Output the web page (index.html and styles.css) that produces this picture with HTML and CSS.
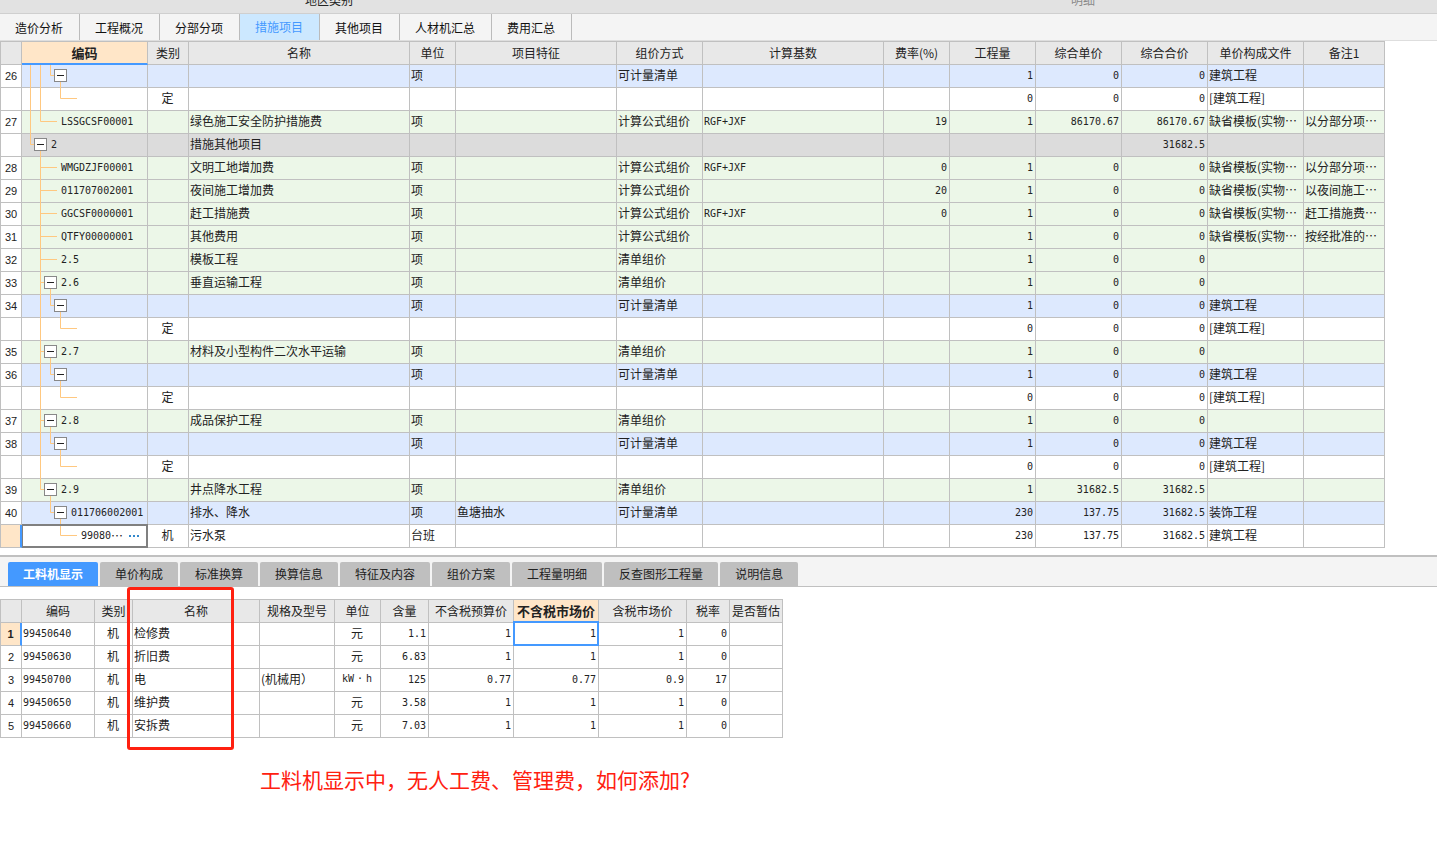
FILE: index.html
```
<!DOCTYPE html>
<html lang="zh-CN">
<head>
<meta charset="utf-8">
<title>措施项目</title>
<link rel="stylesheet" href="styles.css">
</head>
<body>
<svg class="defs" aria-hidden="true">
  <symbol id="end4" viewBox="0 0 60 23"><path d="M18.5 0V23M28.5 0V10.5H32M38.5 17V23"/></symbol>
  <symbol id="leaf4" viewBox="0 0 60 23"><path d="M18.5 0V23M38.5 0V10.5H55"/></symbol>
  <symbol id="outer" viewBox="0 0 60 23"><path d="M8.5 0V23"/></symbol>
  <symbol id="last2" viewBox="0 0 60 23"><path d="M18.5 0V10.5H35"/></symbol>
  <symbol id="root" viewBox="0 0 60 23"><path d="M8.5 0V10.5H12M18.5 17V23"/></symbol>
  <symbol id="leaf2" viewBox="0 0 60 23"><path d="M18.5 0V23M18.5 10.5H35"/></symbol>
  <symbol id="node3" viewBox="0 0 60 23"><path d="M18.5 0V23M18.5 10.5H22M28.5 17V23"/></symbol>
  <symbol id="node3end" viewBox="0 0 60 23"><path d="M18.5 0V10.5H22M28.5 17V23"/></symbol>
  <symbol id="node4end" viewBox="0 0 60 23"><path d="M28.5 0V10.5H32M38.5 17V23"/></symbol>
  <symbol id="leaf4end" viewBox="0 0 60 23"><path d="M38.5 0V10.5H55"/></symbol>
</svg>

<header class="ribbon"><span class="region">地区类别</span><span class="detail">明细</span></header>

<nav class="main-tabs">
  <button>造价分析</button><button>工程概况</button><button>分部分项</button><button class="active">措施项目</button><button>其他项目</button><button>人材机汇总</button><button>费用汇总</button>
</nav>

<main>
<table class="grid measures">
<colgroup><col class="w21"><col class="w126"><col class="w41"><col class="w221"><col class="w46"><col class="w161"><col class="w86"><col class="w181"><col class="w66"><col class="w86"><col class="w86"><col class="w86"><col class="w96"><col class="w81"></colgroup>
<thead><tr><th></th><th class="current underlined">编码</th><th>类别</th><th>名称</th><th>单位</th><th>项目特征</th><th>组价方式</th><th>计算基数</th><th>费率(%)</th><th>工程量</th><th>综合单价</th><th>综合合价</th><th>单价构成文件</th><th>备注1</th></tr></thead>
<tbody>
<tr class="blue"><td>26</td><td><div class="tree l4"><svg><use href="#outer"/><use href="#end4"/></svg><button class="toggle" aria-label="折叠"></button></div></td><td></td><td></td><td>项</td><td></td><td>可计量清单</td><td></td><td></td><td>1</td><td>0</td><td>0</td><td>建筑工程</td><td></td></tr>
<tr><td></td><td><div class="tree"><svg><use href="#outer"/><use href="#leaf4"/></svg></div></td><td>定</td><td></td><td></td><td></td><td></td><td></td><td></td><td>0</td><td>0</td><td>0</td><td>[建筑工程]</td><td></td></tr>
<tr class="green"><td>27</td><td><div class="tree leaf"><svg><use href="#outer"/><use href="#last2"/></svg><span>LSSGCSF00001</span></div></td><td></td><td>绿色施工安全防护措施费</td><td>项</td><td></td><td>计算公式组价</td><td>RGF+JXF</td><td>19</td><td>1</td><td>86170.67</td><td>86170.67</td><td>缺省模板(实物…</td><td>以分部分项…</td></tr>
<tr class="gray"><td></td><td><div class="tree l2"><svg><use href="#root"/></svg><button class="toggle" aria-label="折叠"></button><span>2</span></div></td><td></td><td>措施其他项目</td><td></td><td></td><td></td><td></td><td></td><td></td><td></td><td>31682.5</td><td></td><td></td></tr>
<tr class="green"><td>28</td><td><div class="tree leaf"><svg><use href="#leaf2"/></svg><span>WMGDZJF00001</span></div></td><td></td><td>文明工地增加费</td><td>项</td><td></td><td>计算公式组价</td><td>RGF+JXF</td><td>0</td><td>1</td><td>0</td><td>0</td><td>缺省模板(实物…</td><td>以分部分项…</td></tr>
<tr class="green"><td>29</td><td><div class="tree leaf"><svg><use href="#leaf2"/></svg><span>011707002001</span></div></td><td></td><td>夜间施工增加费</td><td>项</td><td></td><td>计算公式组价</td><td></td><td>20</td><td>1</td><td>0</td><td>0</td><td>缺省模板(实物…</td><td>以夜间施工…</td></tr>
<tr class="green"><td>30</td><td><div class="tree leaf"><svg><use href="#leaf2"/></svg><span>GGCSF0000001</span></div></td><td></td><td>赶工措施费</td><td>项</td><td></td><td>计算公式组价</td><td>RGF+JXF</td><td>0</td><td>1</td><td>0</td><td>0</td><td>缺省模板(实物…</td><td>赶工措施费…</td></tr>
<tr class="green"><td>31</td><td><div class="tree leaf"><svg><use href="#leaf2"/></svg><span>QTFY00000001</span></div></td><td></td><td>其他费用</td><td>项</td><td></td><td>计算公式组价</td><td></td><td></td><td>1</td><td>0</td><td>0</td><td>缺省模板(实物…</td><td>按经批准的…</td></tr>
<tr class="green"><td>32</td><td><div class="tree leaf"><svg><use href="#leaf2"/></svg><span>2.5</span></div></td><td></td><td>模板工程</td><td>项</td><td></td><td>清单组价</td><td></td><td></td><td>1</td><td>0</td><td>0</td><td></td><td></td></tr>
<tr class="green"><td>33</td><td><div class="tree l3"><svg><use href="#node3"/></svg><button class="toggle" aria-label="折叠"></button><span>2.6</span></div></td><td></td><td>垂直运输工程</td><td>项</td><td></td><td>清单组价</td><td></td><td></td><td>1</td><td>0</td><td>0</td><td></td><td></td></tr>
<tr class="blue"><td>34</td><td><div class="tree l4"><svg><use href="#end4"/></svg><button class="toggle" aria-label="折叠"></button></div></td><td></td><td></td><td>项</td><td></td><td>可计量清单</td><td></td><td></td><td>1</td><td>0</td><td>0</td><td>建筑工程</td><td></td></tr>
<tr><td></td><td><div class="tree"><svg><use href="#leaf4"/></svg></div></td><td>定</td><td></td><td></td><td></td><td></td><td></td><td></td><td>0</td><td>0</td><td>0</td><td>[建筑工程]</td><td></td></tr>
<tr class="green"><td>35</td><td><div class="tree l3"><svg><use href="#node3"/></svg><button class="toggle" aria-label="折叠"></button><span>2.7</span></div></td><td></td><td>材料及小型构件二次水平运输</td><td>项</td><td></td><td>清单组价</td><td></td><td></td><td>1</td><td>0</td><td>0</td><td></td><td></td></tr>
<tr class="blue"><td>36</td><td><div class="tree l4"><svg><use href="#end4"/></svg><button class="toggle" aria-label="折叠"></button></div></td><td></td><td></td><td>项</td><td></td><td>可计量清单</td><td></td><td></td><td>1</td><td>0</td><td>0</td><td>建筑工程</td><td></td></tr>
<tr><td></td><td><div class="tree"><svg><use href="#leaf4"/></svg></div></td><td>定</td><td></td><td></td><td></td><td></td><td></td><td></td><td>0</td><td>0</td><td>0</td><td>[建筑工程]</td><td></td></tr>
<tr class="green"><td>37</td><td><div class="tree l3"><svg><use href="#node3"/></svg><button class="toggle" aria-label="折叠"></button><span>2.8</span></div></td><td></td><td>成品保护工程</td><td>项</td><td></td><td>清单组价</td><td></td><td></td><td>1</td><td>0</td><td>0</td><td></td><td></td></tr>
<tr class="blue"><td>38</td><td><div class="tree l4"><svg><use href="#end4"/></svg><button class="toggle" aria-label="折叠"></button></div></td><td></td><td></td><td>项</td><td></td><td>可计量清单</td><td></td><td></td><td>1</td><td>0</td><td>0</td><td>建筑工程</td><td></td></tr>
<tr><td></td><td><div class="tree"><svg><use href="#leaf4"/></svg></div></td><td>定</td><td></td><td></td><td></td><td></td><td></td><td></td><td>0</td><td>0</td><td>0</td><td>[建筑工程]</td><td></td></tr>
<tr class="green"><td>39</td><td><div class="tree l3"><svg><use href="#node3end"/></svg><button class="toggle" aria-label="折叠"></button><span>2.9</span></div></td><td></td><td>井点降水工程</td><td>项</td><td></td><td>清单组价</td><td></td><td></td><td>1</td><td>31682.5</td><td>31682.5</td><td></td><td></td></tr>
<tr class="blue"><td>40</td><td><div class="tree l4"><svg><use href="#node4end"/></svg><button class="toggle" aria-label="折叠"></button><span>011706002001</span></div></td><td></td><td>排水、降水</td><td>项</td><td>鱼塘抽水</td><td>可计量清单</td><td></td><td></td><td>230</td><td>137.75</td><td>31682.5</td><td>装饰工程</td><td></td></tr>
<tr class="selected"><td></td><td><div class="tree deep-leaf"><svg><use href="#leaf4end"/></svg><span>99080<i>…</i></span><button class="more" aria-label="更多"><svg viewBox="0 0 12 2"><path d="M1 0h2v2H1zM5 0h2v2H5zM9 0h2v2H9z"/></svg></button></div></td><td>机</td><td>污水泵</td><td>台班</td><td></td><td></td><td></td><td></td><td>230</td><td>137.75</td><td>31682.5</td><td>建筑工程</td><td></td></tr>
</tbody>
</table>

<section class="lower">
<nav class="sub-tabs">
  <button class="active">工料机显示</button><button>单价构成</button><button>标准换算</button><button>换算信息</button><button>特征及内容</button><button>组价方案</button><button>工程量明细</button><button>反查图形工程量</button><button>说明信息</button>
</nav>
<div class="resource-area">
<table class="grid resources">
<colgroup><col class="w21"><col class="w73"><col class="w38"><col class="w127"><col class="w75"><col class="w46"><col class="w48"><col class="w85"><col class="w85"><col class="w88"><col class="w43"><col class="w53"></colgroup>
<thead><tr><th></th><th>编码</th><th>类别</th><th>名称</th><th>规格及型号</th><th>单位</th><th>含量</th><th>不含税预算价</th><th class="current">不含税市场价</th><th>含税市场价</th><th>税率</th><th>是否暂估</th></tr></thead>
<tbody>
<tr class="selected"><td>1</td><td>99450640</td><td>机</td><td>检修费</td><td></td><td>元</td><td>1.1</td><td>1</td><td class="focus">1</td><td>1</td><td>0</td><td></td></tr>
<tr><td>2</td><td>99450630</td><td>机</td><td>折旧费</td><td></td><td>元</td><td>6.83</td><td>1</td><td>1</td><td>1</td><td>0</td><td></td></tr>
<tr><td>3</td><td>99450700</td><td>机</td><td>电</td><td>(机械用）</td><td class="mono">kW<span class="dot">·</span>h</td><td>125</td><td>0.77</td><td>0.77</td><td>0.9</td><td>17</td><td></td></tr>
<tr><td>4</td><td>99450650</td><td>机</td><td>维护费</td><td></td><td>元</td><td>3.58</td><td>1</td><td>1</td><td>1</td><td>0</td><td></td></tr>
<tr><td>5</td><td>99450660</td><td>机</td><td>安拆费</td><td></td><td>元</td><td>7.03</td><td>1</td><td>1</td><td>1</td><td>0</td><td></td></tr>
</tbody>
</table>
<div class="marker"></div>
</div>
<p class="note">工料机显示中，无人工费、管理费，如何添加?</p>
</section>
</main>
</body>
</html>
```
FILE: styles.css
```
* { box-sizing: border-box; }
body {
  margin: 0;
  background: #fff;
  color: #222;
  font: 12px/18px "Noto Sans CJK SC", sans-serif;
}
button { font: inherit; color: inherit; border: 0; margin: 0; padding: 0; background: none; }
.defs { display: none; }

.ribbon {
  display: flex;
  align-items: flex-end;
  height: 14px;
  padding: 0 0 4px 305px;
  overflow: hidden;
  background: #e2e2e2;
  border-bottom: 1px solid #cfcfcf;
}
.detail { margin-left: auto; margin-right: 342px; color: #888; }

.main-tabs {
  display: flex;
  height: 27px;
  background: #f4f4f4;
  border-bottom: 1px solid #dedede;
}
.main-tabs button { padding: 2px 16px 0 15px; border-right: 1px solid #bbb; color: #111; }
.main-tabs .active { padding-top: 0; background: #cce8ff; color: #4499ff; }

/* data grids */
.grid {
  table-layout: fixed;
  width: 0;
  border-collapse: separate;
  border-spacing: 0;
  border-top: 1px solid #c0c0c0;
  border-left: 1px solid #c0c0c0;
}
.grid th, .grid td {
  height: 23px;
  padding: 0 2px 0 1px;
  border-right: 1px solid #c0c0c0;
  border-bottom: 1px solid #c0c0c0;
  white-space: nowrap;
  overflow: hidden;
}
.grid th { background: #e8e8e8; font-weight: 400; padding: 0; }
.grid td { line-height: 18px; padding-bottom: 2px; }
.grid th.current { background: #ffe6c8; font-weight: 700; font-size: 13px; }
.grid th.underlined { border-bottom: 2px solid #4499ff; }
.grid td:first-child {
  padding: 0 0 1px;
  background: #fff;
  text-align: center;
  font: 11px/16px "Liberation Sans", sans-serif;
}
.grid .selected td:first-child { background: #ffe6c8; border-right: 2px solid #4499ff; font-weight: 700; }
.grid td:nth-child(3) { text-align: center; }
.blue td { background: #dde9fe; }
.green td { background: #ecf7e8; }
.gray td { background: #dcdcdc; }

.measures td:nth-child(n+8):nth-child(-n+12),
.resources td:nth-child(2),
.resources td:nth-child(n+7),
.resources .mono,
.tree { font-family: "DejaVu Sans Mono", monospace; font-size: 10px; }
.measures td:nth-child(n+8):nth-child(-n+12),
.resources td:nth-child(2),
.resources td:nth-child(n+7) { padding-bottom: 0; }
.measures td:nth-child(n+9):nth-child(-n+12),
.resources td:nth-child(n+7) { text-align: right; }
.resources td:nth-child(6) { text-align: center; }
.dot { display: inline-block; width: 12px; }

.w21 { width: 21px; } .w126 { width: 126px; } .w41 { width: 41px; } .w221 { width: 221px; }
.w46 { width: 46px; } .w161 { width: 161px; } .w86 { width: 86px; } .w181 { width: 181px; }
.w66 { width: 66px; } .w96 { width: 96px; } .w81 { width: 81px; } .w73 { width: 73px; }
.w38 { width: 38px; } .w127 { width: 127px; } .w75 { width: 75px; } .w48 { width: 48px; }
.w85 { width: 85px; } .w88 { width: 88px; } .w43 { width: 43px; } .w53 { width: 53px; }

/* tree column */
.measures td:nth-child(2) { padding: 0; overflow: visible; }
.tree { position: relative; display: flex; align-items: center; height: 22px; padding-bottom: 1px; }
.tree > svg {
  position: absolute;
  top: 0;
  left: 0;
  width: 60px;
  height: 23px;
  fill: none;
  stroke: #ffc880;
  stroke-width: 1;
}
.tree span { display: flex; align-items: center; line-height: 18px; }
.tree i { font: 12px/18px "Noto Sans CJK SC", sans-serif; }
.toggle {
  position: relative;
  flex: none;
  display: flex;
  align-items: center;
  justify-content: center;
  width: 13px;
  height: 13px;
  margin-right: 4px;
  background: #fff;
  border: 1px solid #888;
}
.toggle::before { content: ""; width: 7px; height: 1px; background: #222; }
.l2 { padding-left: 12px; }
.l3 { padding-left: 22px; }
.l4 { padding-left: 32px; }
.leaf { padding-left: 39px; }
.deep-leaf { padding-left: 59px; }
.deep-leaf::after {
  content: "";
  position: absolute;
  inset: -1px -1px -1px 0;
  border: 2px solid #808080;
  border-left-width: 1px;
  pointer-events: none;
}
.tree .more { display: flex; width: 12px; margin-left: 5px; }
.more svg { width: 12px; height: 2px; fill: #3388cc; }

/* lower pane */
.lower { margin-top: 7px; border-top: 2px solid #c0c0c0; }
.sub-tabs {
  display: flex;
  gap: 2px;
  padding: 5px 8px 0;
  background: #f4f4f4;
  border-bottom: 1px solid #c0c0c0;
}
.sub-tabs button {
  height: 24px;
  padding: 0 15px;
  background: #bfbfbf;
  border-radius: 2px 2px 0 0;
}
.sub-tabs .active { background: #4499ff; color: #fff; font-weight: 700; }
.resource-area { position: relative; padding-top: 12px; }
.focus { position: relative; }
.grid td.focus { overflow: visible; }
.focus::after {
  content: "";
  position: absolute;
  inset: -2px -1px -1px -1px;
  border: 2px solid #4499ff;
}
.marker {
  position: absolute;
  top: 0;
  left: 127px;
  width: 107px;
  height: 163px;
  border: 3px solid #ff2010;
  border-radius: 3px;
}
.note { margin: 26px 0 0; padding-left: 260px; font-size: 21px; line-height: 30px; color: #ff2010; }
```
